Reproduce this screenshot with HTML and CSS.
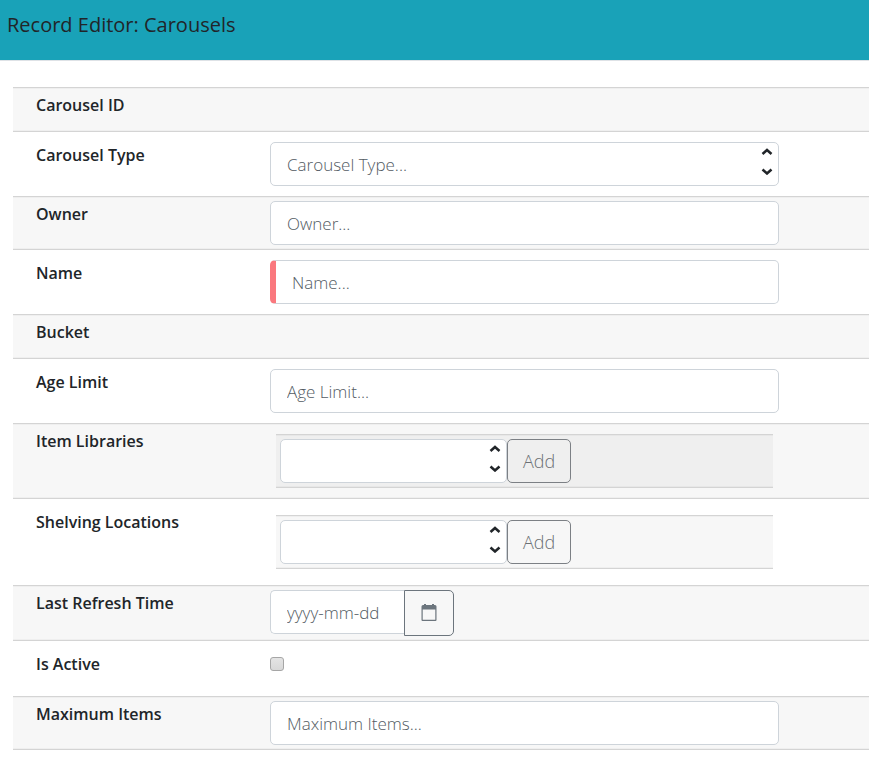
FILE: index.html
```html
<!DOCTYPE html>
<html lang="en">
<head>
    <meta charset="utf-8">
    <title>Record Editor: Carousels</title>
    <link rel="stylesheet" href="styles.css">
</head>
<body>
    <header class="modal-header">
        <h1>Record Editor: Carousels</h1>
    </header>
    <form class="editor">
        <div class="row striped">
            <span class="label">Carousel ID</span>
        </div>
        <div class="row">
            <label class="label" for="type">Carousel Type</label>
            <div class="combo">
                <input type="text" id="type" class="field" placeholder="Carousel Type...">
                <svg class="arrows" viewBox="0 0 12 28"><path d="M1.500 7 6 3l4.500 4M1.500 22.500l4.500 4 4.500-4"/></svg>
            </div>
        </div>
        <div class="row striped">
            <label class="label" for="owner">Owner</label>
            <input type="text" id="owner" class="field" placeholder="Owner...">
        </div>
        <div class="row">
            <label class="label" for="name">Name</label>
            <input type="text" id="name" class="field required" placeholder="Name..." required>
        </div>
        <div class="row striped">
            <span class="label">Bucket</span>
        </div>
        <div class="row">
            <label class="label" for="age">Age Limit</label>
            <input type="text" id="age" class="field" placeholder="Age Limit...">
        </div>
        <div class="row striped">
            <label class="label" for="libraries">Item Libraries</label>
            <div class="multi striped">
                <div class="combo">
                    <input type="text" id="libraries" class="field">
                    <svg class="arrows" viewBox="0 0 12 28"><path d="M1.500 7 6 3l4.500 4M1.500 22.500l4.500 4 4.500-4"/></svg>
                </div>
                <button type="button" class="btn" disabled>Add</button>
            </div>
        </div>
        <div class="row">
            <label class="label" for="locations">Shelving Locations</label>
            <div class="multi striped">
                <div class="combo">
                    <input type="text" id="locations" class="field">
                    <svg class="arrows" viewBox="0 0 12 28"><path d="M1.500 7 6 3l4.500 4M1.500 22.500l4.500 4 4.500-4"/></svg>
                </div>
                <button type="button" class="btn" disabled>Add</button>
            </div>
        </div>
        <div class="row striped">
            <label class="label" for="refresh">Last Refresh Time</label>
            <div class="date">
                <input type="text" id="refresh" class="field" placeholder="yyyy-mm-dd">
                <button type="button" class="btn-date" aria-label="Select date">
                    <svg width="16" height="18" viewBox="0 0 16 18"><path d="M2 1h1V0h2v1h6V0h2v1h1q1.500 0 1.500 1.500V16q0 1-1 1H1.500q-1 0-1-1V2.500Q.5 1 2 1zm-.3 4.500v10.300h12.600V5.500z"/></svg>
                </button>
            </div>
        </div>
        <div class="row">
            <label class="label" for="active">Is Active</label>
            <input type="checkbox" id="active" class="check">
        </div>
        <div class="row striped">
            <label class="label" for="max">Maximum Items</label>
            <input type="text" id="max" class="field" placeholder="Maximum Items...">
        </div>
    </form>
</body>
</html>
```
FILE: styles.css
```css
* {
    box-sizing: border-box;
}
body {
    margin: 0;
    font-family: "Open Sans", "Noto Sans", sans-serif;
    font-size: 16px;
    line-height: 24px;
    color: #212529;
    background: #fff;
}
.modal-header {
    height: 61px;
    padding: 10px 7px;
    background: #19a2b8;
    border-bottom: 1px solid #dee2e6;
}
h1 {
    margin: 0;
    font-size: 20px;
    line-height: 30px;
    font-weight: 500;
}
.editor {
    margin: 26px 0 0 13px;
}
.row {
    display: grid;
    grid-template-columns: 234fr 509fr 90fr;
    align-items: start;
    padding: 10px 0 10px 23px;
}
.striped {
    padding-top: 4px;
    padding-bottom: 4px;
    background: rgba(0, 0, 0, .03);
    border-top: 1px solid #d4d4d4;
    border-bottom: 1px solid #d4d4d4;
    box-shadow: inset 0 1px rgba(0, 0, 0, .03), inset 0 -1px rgba(0, 0, 0, .03);
}
.label {
    min-height: 35px;
    padding-top: 1px;
    font-weight: 600;
}
.field {
    display: block;
    width: 100%;
    height: 44px;
    padding: 0 16px;
    font: inherit;
    font-size: 17px;
    font-weight: 300;
    color: #495057;
    background: #fff;
    border: 1px solid #ced4da;
    border-radius: 5px;
}
.field::placeholder {
    color: #535b63;
    opacity: 1;
}
.required {
    border-left: 6px solid #fa787e;
}
.combo {
    position: relative;
}
.arrows {
    position: absolute;
    top: 5px;
    right: 6px;
    width: 12px;
    height: 28px;
    fill: none;
    stroke: #212529;
    stroke-width: 2.5;
}
.multi {
    display: flex;
    margin: 6px;
    padding-left: 4px;
}
.multi .combo {
    width: 227px;
}
.btn {
    width: 64px;
    height: 44px;
    padding: 0;
    font: inherit;
    font-size: 18px;
    font-weight: 300;
    color: #6c7075;
    background: transparent;
    border: 1px solid #7c8085;
    border-radius: 5px;
}
.date {
    display: flex;
    align-items: flex-start;
}
.date .field {
    width: 134px;
    border-right: 0;
    border-radius: 5px 0 0 5px;
}
.btn-date {
    width: 50px;
    height: 46px;
    padding: 0;
    background: transparent;
    border: 1px solid #6c757d;
    border-radius: 0 5px 5px 0;
}
.btn-date svg {
    display: block;
    margin: 0 auto;
    fill: #6c757d;
    fill-rule: evenodd;
}
.check {
    appearance: none;
    width: 14px;
    height: 14px;
    margin: 6px 0;
    background: linear-gradient(#e4e4e4, #d8d8d8);
    border: 1px solid #a6a6a6;
    border-radius: 3px;
}
```
